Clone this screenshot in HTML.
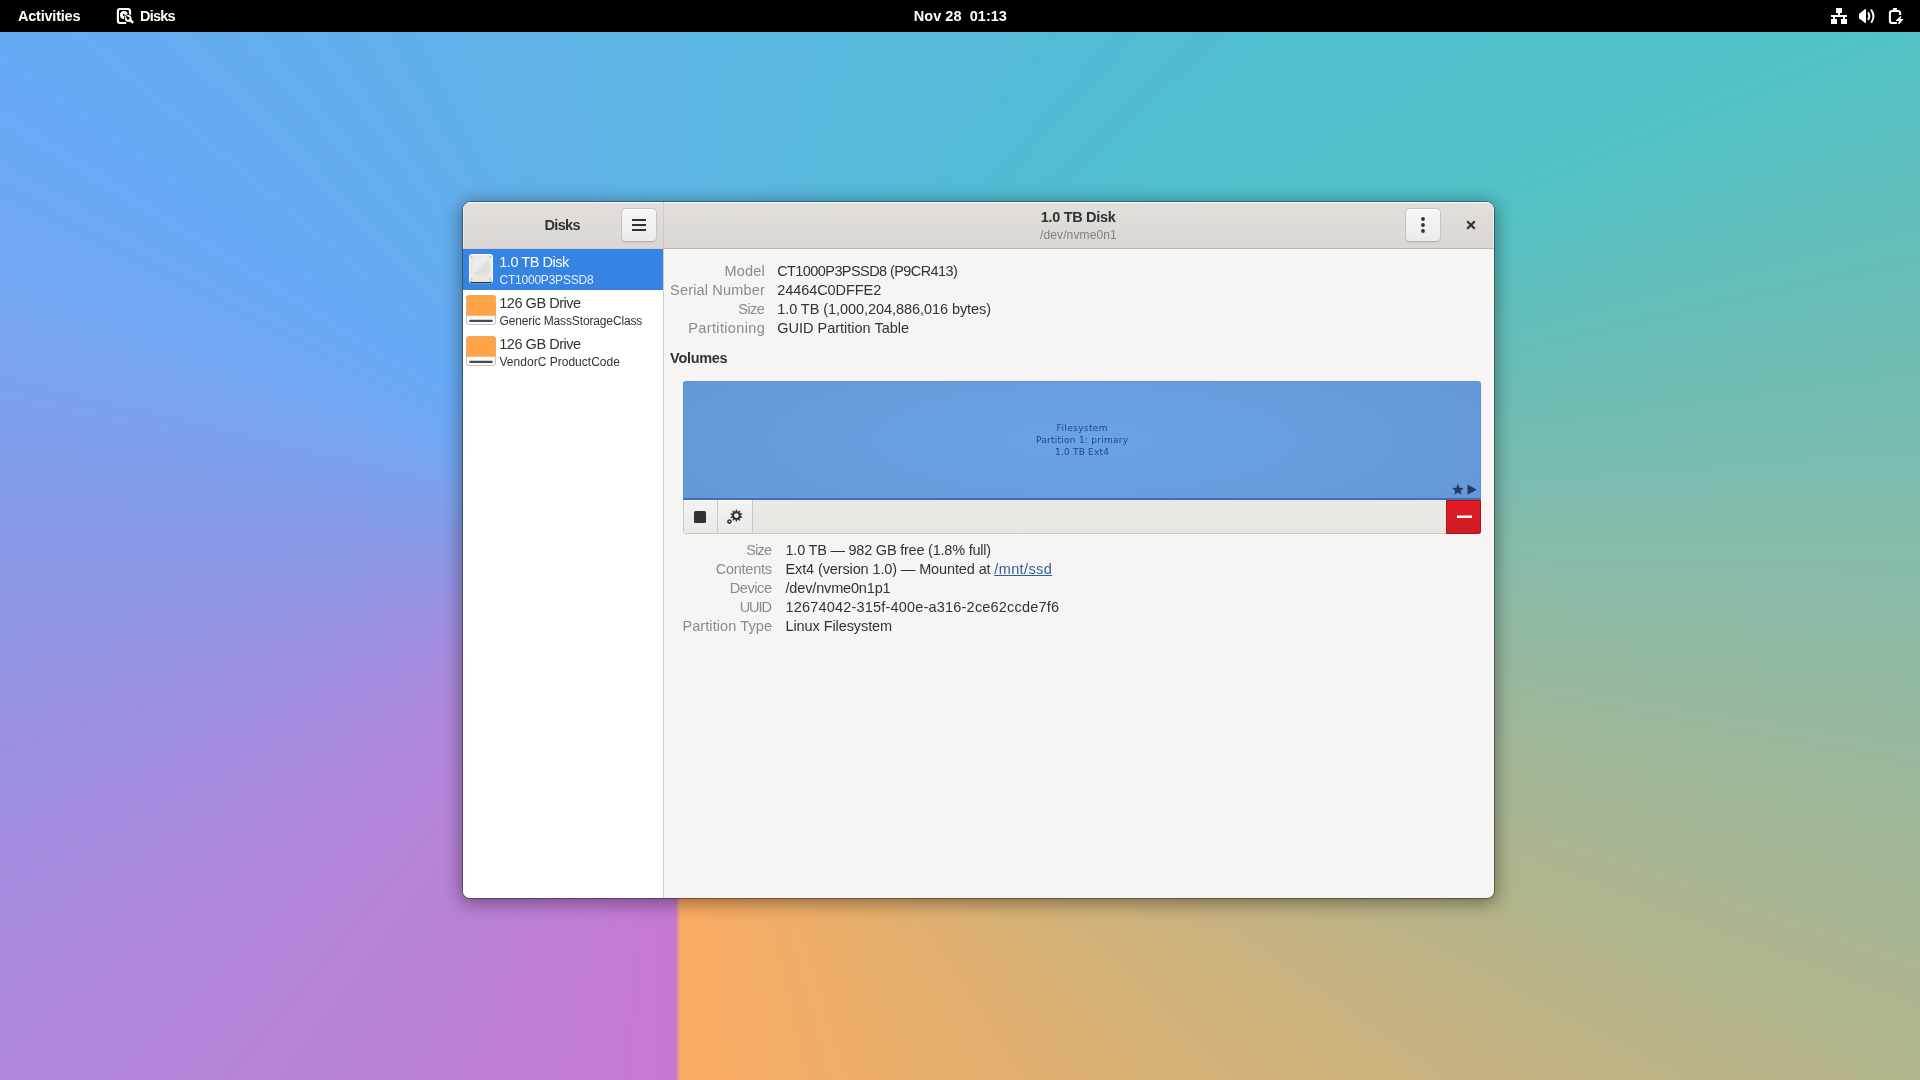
<!DOCTYPE html>
<html lang="en">
<head>
<meta charset="utf-8">
<title>Disks</title>
<style>
*{box-sizing:border-box;margin:0;padding:0}
html,body{width:1920px;height:1080px;overflow:hidden}
body{
  font-family:"Liberation Sans","DejaVu Sans",sans-serif;
  font-size:14.5px;color:#2e3436;position:relative;
  background:conic-gradient(from 180deg at 678px 540px,
    #c678d2 0deg,#b882d6 32.5deg,#b087dc 51.8deg,#9f8ede 68.9deg,#8899e7 90deg,#74a5f1 109.6deg,
    #67a9f5 124deg,#61afea 150.9deg,#5cb5e2 180deg,#55b9d9 209.4deg,#51bcd1 226.2deg,#4fc2c8 246deg,
    #6abdb6 259deg,#84bcab 270deg,#9eb79b 281.9deg,#b2b48b 293.4deg,#c5b280 303deg,#d5b177 315.7deg,
    #e6af6d 332.2deg,#fcab62 360deg);
}
.t{position:absolute;white-space:pre;line-height:20px;height:20px;will-change:opacity}
svg{position:absolute;overflow:visible}
/* ---------- top bar ---------- */
#topbar{position:absolute;left:0;top:0;width:1920px;height:32px;background:#000;color:#fff}
#seam{position:absolute;left:676px;top:560px;width:4px;height:520px;background:linear-gradient(90deg,#c678d2,#fcab62)}
/* ---------- window ---------- */
#win{position:absolute;left:463px;top:202px;width:1031px;height:696px;border-radius:8px 8px 7px 7px;
  background:#f6f5f4;
  box-shadow:0 0 0 1px rgba(0,0,0,.34),0 3px 18px 2px rgba(0,0,0,.40);
  overflow:hidden}
#hdr{position:absolute;left:0;top:0;width:1031px;height:47px;
  background:linear-gradient(#e2dfdc,#dad7d3);border-bottom:1px solid #bab5b0;
  box-shadow:inset 0 1px rgba(255,255,255,.85),inset 1px 0 rgba(255,255,255,.55),inset -1px 0 rgba(255,255,255,.55)}
#side{position:absolute;left:0;top:47px;width:200px;height:649px;background:#fff}
#sep{position:absolute;left:200px;top:0;width:1px;height:696px;background:linear-gradient(#cfcbc6 0,#c9c5bf 46px,#bab5b0 46px,#bab5b0 47px,#cfcac5 47px)}
.btn{position:absolute;width:36px;height:34px;border-radius:5px;border:1px solid #c9c3bd;border-bottom-color:#b9b2ab;
  background:linear-gradient(#f7f6f5,#edebe9);box-shadow:inset 0 1px rgba(255,255,255,.9),0 1px 1px rgba(0,0,0,.06)}
.row{position:absolute;left:0;width:200px;height:41px}
.row.sel{background:#3584e4;box-shadow:inset 0 1px #4a7fc8}
#hb{position:absolute;left:0;top:46px;width:200px;height:1px;background:#c3d0e6}
/* ---------- volumes ---------- */
#volbox{position:absolute;left:220px;top:179px;width:798px;height:119px;background:radial-gradient(ellipse 62% 110% at 50% 50%,#6ba2e6 0%,#689cdd 55%,#6597d8 100%);
  border:1px solid #5e8fd0;border-bottom:2px solid #3d72b6;border-radius:3px 3px 0 0}
#tool{position:absolute;left:220px;top:298px;width:798px;height:34px;background:linear-gradient(#ebe9e6,#e8e6e3);
  border:1px solid #cdc7c2;border-top:none;border-radius:0 0 3px 3px}
.tbtn{position:absolute;top:0;height:33px;width:35px;background:linear-gradient(#f4f3f1,#ebe9e7);border-right:1px solid #cdc7c2;
  box-shadow:inset 0 1px rgba(255,255,255,.9)}
#del{position:absolute;left:983px;top:298px;width:35px;height:34px;background:linear-gradient(#e01b24,#cf1c24);
  border:1px solid #a8161f;border-top-color:#b3161f;border-radius:0 0 3px 0}
</style>
</head>
<body>
<div id="topbar">
  <!-- Disks app icon -->
  <svg style="left:116px;top:7px" width="18" height="18" viewBox="0 0 18 18">
    <path d="M14 7.900V4.200Q14 2 11.800 2H4.100Q1.900 2 1.900 4.200V13.800Q1.900 16 4.100 16H10.200" fill="none" stroke="#fff" stroke-width="2.200"/>
    <circle cx="7.900" cy="8" r="3.900" fill="#fff"/>
    <circle cx="7.800" cy="8" r="1" fill="#000"/>
    <circle cx="12.200" cy="11.400" r="4.200" fill="#000"/>
    <path d="M13.900 13.100L16.500 15.300" fill="none" stroke="#000" stroke-width="4.400" stroke-linecap="round"/>
    <circle cx="12.200" cy="11.400" r="2.400" fill="none" stroke="#fff" stroke-width="1.900"/>
    <path d="M12.200 11.400L10.300 9.500" fill="none" stroke="#000" stroke-width="1.800"/>
    <path d="M13.900 13.100L16.300 15.100" fill="none" stroke="#fff" stroke-width="2.600" stroke-linecap="round"/>
  </svg>
  <span class="t" style="left:18.00px;top:5.58px;font-size:14.5px;letter-spacing:-0.22px;color:#ffffff;font-weight:bold">Activities</span>
  <span class="t" style="left:140.00px;top:5.58px;font-size:14.5px;letter-spacing:-0.78px;color:#ffffff;font-weight:bold">Disks</span>
  <span class="t" style="left:913.75px;top:5.58px;font-size:14.5px;letter-spacing:0.04px;color:#ffffff;font-weight:bold">Nov 28  01:13</span>
  <!-- network -->
  <svg style="left:1831px;top:8px" width="16" height="16" viewBox="0 0 16 16" fill="#fff">
    <rect x="5" y="0" width="6" height="5"/><rect x="7" y="5" width="2" height="2"/>
    <rect x="0" y="7" width="16" height="2"/>
    <rect x="2" y="9" width="2" height="2"/><rect x="12" y="9" width="2" height="2"/>
    <rect x="0" y="11" width="6" height="5"/><rect x="10" y="11" width="6" height="5"/>
  </svg>
  <!-- volume -->
  <svg style="left:1859px;top:8px" width="16" height="16" viewBox="0 0 16 16">
    <path d="M0 6.400Q0 5.600 .8 5.300L6.200 1.100Q7 .700 7 1.700V14.500Q7 15.500 6.200 15.100L.8 10.900Q0 10.600 0 9.800Z" fill="#fff"/>
    <path d="M9.400 5Q11.300 8.100 9.400 11.200" fill="none" stroke="#fff" stroke-width="2" stroke-linecap="round"/>
    <path d="M12.300 2.200Q16.500 8.100 12.600 14" fill="none" stroke="#fff" stroke-width="2" stroke-linecap="round"/>
  </svg>
  <!-- battery charging -->
  <svg style="left:1888px;top:8px" width="16" height="16" viewBox="0 0 16 16">
    <path d="M4.900 2.200V.800Q4.900 0 5.700 0H8.300Q9.100 0 9.100 .800V2.200" fill="#fff"/>
    <path d="M8.900 15.050H4.200Q1.900 15.050 1.900 12.800V5.200Q1.900 2.950 4.200 2.950H9.800Q12.100 2.950 12.100 5.200V7" fill="none" stroke="#fff" stroke-width="2.100"/>
    <path d="M12.700 8L8 12.300V12.900H11.200L10 15.900H11.400L15.200 11.600V11.100H12.500L13.400 8.200Z" fill="#fff"/>
  </svg>
</div>

<div id="seam"></div>

<div id="win">
  <div id="hdr"></div>
  <div id="side"></div>
  <!-- sidebar rows -->
  <div class="row sel" style="top:47px"></div>
  <div class="row" style="top:88px"></div>
  <div class="row" style="top:129px"></div>
  <div id="hb"></div>
  <div id="sep"></div>

  <!-- header buttons -->
  <div class="btn" style="left:158px;top:6px"></div>
  <svg style="left:168px;top:14px" width="16" height="16" viewBox="0 0 16 16" fill="#2e3436">
    <rect x="1" y="3" width="14" height="2"/><rect x="1" y="8" width="14" height="2"/><rect x="1" y="13" width="14" height="2"/>
  </svg>
  <div class="btn" style="left:942px;top:6px"></div>
  <svg style="left:952px;top:15px" width="16" height="16" viewBox="0 0 16 16" fill="#2e3436">
    <circle cx="8" cy="2" r="1.900"/><circle cx="8" cy="8" r="1.900"/><circle cx="8" cy="14" r="1.900"/>
  </svg>
  <svg style="left:1000px;top:15px" width="16" height="16" viewBox="0 0 16 16">
    <path d="M4.200 4.200L11.800 11.800M11.800 4.200L4.200 11.800" stroke="#2e3436" stroke-width="2.200" fill="none"/>
  </svg>

  <!-- hard-disk icon (selected row) -->
  <svg style="left:6px;top:52px" width="24" height="30" viewBox="0 0 24 30">
    <rect x="0" y="0" width="24" height="29.500" rx="3" fill="#fbfbfa"/>
    <rect x="1.500" y="26" width="21" height="3.200" rx="1" fill="#1f2d4d"/>
    <rect x="1.200" y="1.200" width="21.600" height="26.800" rx="2" fill="#e9e8e5"/>
    <circle cx="12" cy="12.500" r="9.600" fill="#e1e0dc"/>
    <path d="M3 10A9.600 9.600 0 0 1 19 5.500L5 19A9.600 9.600 0 0 1 3 10Z" fill="#eeedeb" opacity=".8"/>
    <circle cx="2.800" cy="2.800" r=".6" fill="#77797b"/><circle cx="21.200" cy="2.800" r=".6" fill="#77797b"/>
    <circle cx="2.800" cy="25" r=".6" fill="#77797b"/><circle cx="21.200" cy="25" r=".6" fill="#77797b"/>
  </svg>
  <!-- removable drive icons -->
  <svg style="left:3px;top:93px" width="30" height="30" viewBox="0 0 30 30">
    <rect x=".5" y=".5" width="29" height="29" rx="2.500" fill="#fbfbfa" stroke="#c3c2bf"/>
    <path d="M.300 20.700V2.500Q.300 .200 2.500 .200H27.500Q29.700 .200 29.700 2.500V20.700Z" fill="#ffa348"/>
    <rect x="3.200" y="24.800" width="23.600" height="2.100" rx="1" fill="#4a4a4a"/>
  </svg>
  <svg style="left:3px;top:134px" width="30" height="30" viewBox="0 0 30 30">
    <rect x=".5" y=".5" width="29" height="29" rx="2.500" fill="#fbfbfa" stroke="#c3c2bf"/>
    <path d="M.300 20.700V2.500Q.300 .200 2.500 .200H27.500Q29.700 .200 29.700 2.500V20.700Z" fill="#ffa348"/>
    <rect x="3.200" y="24.800" width="23.600" height="2.100" rx="1" fill="#4a4a4a"/>
  </svg>

  <!-- volumes -->
  <div id="volbox"></div>
  <svg style="left:988px;top:281px" width="28" height="14" viewBox="0 0 28 14" fill="#253a5c">
    <path d="M6.900 .800L8.500 4.700L12.700 5L9.500 7.700L10.500 11.800L6.900 9.600L3.300 11.800L4.300 7.700L1.100 5L5.300 4.700Z"/>
    <path d="M16.500 1.600L25.800 6.700L16.500 11.800Z"/>
  </svg>
  <div id="tool">
    <div class="tbtn" style="left:0;width:34px"></div>
    <div class="tbtn" style="left:34px;width:35px"></div>
  </div>
  <svg style="left:231px;top:309px" width="12" height="12" viewBox="0 0 12 12"><rect width="12" height="12" rx="1.600" fill="#2e3436"/></svg>
  <!-- gears icon -->
  <svg style="left:263px;top:305px" width="20" height="20" viewBox="0 0 20 20">
    <g transform="translate(10.400 8.600)">
      <path d="M0.00 -6.00L1.21 -3.71L3.53 -4.85L3.16 -2.29L5.71 -1.85L3.90 0.00L5.71 1.85L3.16 2.29L3.53 4.85L1.21 3.71L0.00 6.00L-1.21 3.71L-3.53 4.85L-3.16 2.29L-5.71 1.85L-3.90 0.00L-5.71 -1.85L-3.16 -2.29L-3.53 -4.85L-1.21 -3.71Z" fill="#2e3436" stroke="#2e3436" stroke-width=".5" stroke-linejoin="round"/>
      <circle r="2.300" fill="#f3f2f0"/>
    </g>
    <circle cx="3.400" cy="14.600" r="1.550" fill="none" stroke="#2e3436" stroke-width="1.500"/>
  </svg>
  <div id="del"></div>
  <svg style="left:994px;top:313px" width="16" height="4" viewBox="0 0 16 4"><rect x="0" y="0.500" width="15" height="2.500" fill="#fff"/></svg>

  <span class="t" style="left:81.50px;top:12.98px;font-size:14.5px;letter-spacing:-0.68px;color:#2e3436;font-weight:bold">Disks</span>
  <span class="t" style="left:577.80px;top:4.58px;font-size:14.5px;letter-spacing:-0.32px;color:#2e3436;font-weight:bold">1.0 TB Disk</span>
  <span class="t" style="left:577.00px;top:22.54px;font-size:12.0px;letter-spacing:0.12px;color:#7f8182">/dev/nvme0n1</span>
  <span class="t" style="left:36.25px;top:49.68px;font-size:14.5px;letter-spacing:-0.47px;color:#ffffff">1.0 TB Disk</span>
  <span class="t" style="left:36.50px;top:67.64px;font-size:12.0px;letter-spacing:-0.22px;color:#e6effc">CT1000P3PSSD8</span>
  <span class="t" style="left:36.25px;top:90.68px;font-size:14.5px;letter-spacing:-0.47px;color:#2e3436">126 GB Drive</span>
  <span class="t" style="left:36.50px;top:108.64px;font-size:12.0px;letter-spacing:-0.14px;color:#2e3436">Generic MassStorageClass</span>
  <span class="t" style="left:36.25px;top:131.68px;font-size:14.5px;letter-spacing:-0.47px;color:#2e3436">126 GB Drive</span>
  <span class="t" style="left:36.50px;top:149.64px;font-size:12.0px;letter-spacing:0.02px;color:#2e3436">VendorC ProductCode</span>
  <span class="t" style="left:261.58px;top:58.58px;font-size:14.5px;letter-spacing:0.18px;color:#888b8c">Model</span>
  <span class="t" style="left:207.09px;top:77.58px;font-size:14.5px;letter-spacing:0.17px;color:#888b8c">Serial Number</span>
  <span class="t" style="left:275.29px;top:96.58px;font-size:14.5px;letter-spacing:-0.57px;color:#888b8c">Size</span>
  <span class="t" style="left:225.29px;top:115.58px;font-size:14.5px;letter-spacing:0.36px;color:#888b8c">Partitioning</span>
  <span class="t" style="left:314.20px;top:58.58px;font-size:14.5px;letter-spacing:-0.58px;color:#2e3436">CT1000P3PSSD8 (P9CR413)</span>
  <span class="t" style="left:314.20px;top:77.58px;font-size:14.5px;letter-spacing:-0.07px;color:#2e3436">24464C0DFFE2</span>
  <span class="t" style="left:314.20px;top:96.58px;font-size:14.5px;letter-spacing:-0.06px;color:#2e3436">1.0 TB (1,000,204,886,016 bytes)</span>
  <span class="t" style="left:314.20px;top:115.58px;font-size:14.5px;letter-spacing:0.0px;color:#2e3436">GUID Partition Table</span>
  <span class="t" style="left:207.10px;top:146.28px;font-size:14.5px;letter-spacing:-0.31px;color:#2e3436;font-weight:bold">Volumes</span>
  <span class="t" style="left:283.30px;top:337.98px;font-size:14.5px;letter-spacing:-0.84px;color:#888b8c">Size</span>
  <span class="t" style="left:252.70px;top:356.98px;font-size:14.5px;letter-spacing:-0.25px;color:#888b8c">Contents</span>
  <span class="t" style="left:266.72px;top:375.98px;font-size:14.5px;letter-spacing:-0.41px;color:#888b8c">Device</span>
  <span class="t" style="left:276.70px;top:394.98px;font-size:14.5px;letter-spacing:-1.05px;color:#888b8c">UUID</span>
  <span class="t" style="left:219.42px;top:413.98px;font-size:14.5px;letter-spacing:0.09px;color:#888b8c">Partition Type</span>
  <span class="t" style="left:322.50px;top:337.98px;font-size:14.5px;letter-spacing:-0.22px;color:#2e3436">1.0 TB — 982 GB free (1.8% full)</span>
  <span class="t" style="left:322.50px;top:356.98px;font-size:14.5px;letter-spacing:-0.12px;color:#2e3436">Ext4 (version 1.0) — Mounted at</span>
  <span class="t" style="left:531.25px;top:356.98px;font-size:14.5px;letter-spacing:0.39px;color:#2f609a;text-decoration:underline">/mnt/ssd</span>
  <span class="t" style="left:322.50px;top:375.98px;font-size:14.5px;letter-spacing:-0.16px;color:#2e3436">/dev/nvme0n1p1</span>
  <span class="t" style="left:322.50px;top:394.98px;font-size:14.5px;letter-spacing:0.19px;color:#2e3436">12674042-315f-400e-a316-2ce62ccde7f6</span>
  <span class="t" style="left:322.50px;top:413.98px;font-size:14.5px;letter-spacing:-0.09px;color:#2e3436">Linux Filesystem</span>
  <span class="t" style="left:593.49px;top:215.88px;font-size:9.0px;letter-spacing:0.38px;color:#22487f;font-family:'DejaVu Sans','Liberation Sans',sans-serif">Filesystem</span>
  <span class="t" style="left:573.02px;top:227.88px;font-size:9.0px;letter-spacing:0.25px;color:#22487f;font-family:'DejaVu Sans','Liberation Sans',sans-serif">Partition 1: primary</span>
  <span class="t" style="left:592.01px;top:239.88px;font-size:9.0px;letter-spacing:0.2px;color:#22487f;font-family:'DejaVu Sans','Liberation Sans',sans-serif">1.0 TB Ext4</span>
</div>
</body>
</html>
